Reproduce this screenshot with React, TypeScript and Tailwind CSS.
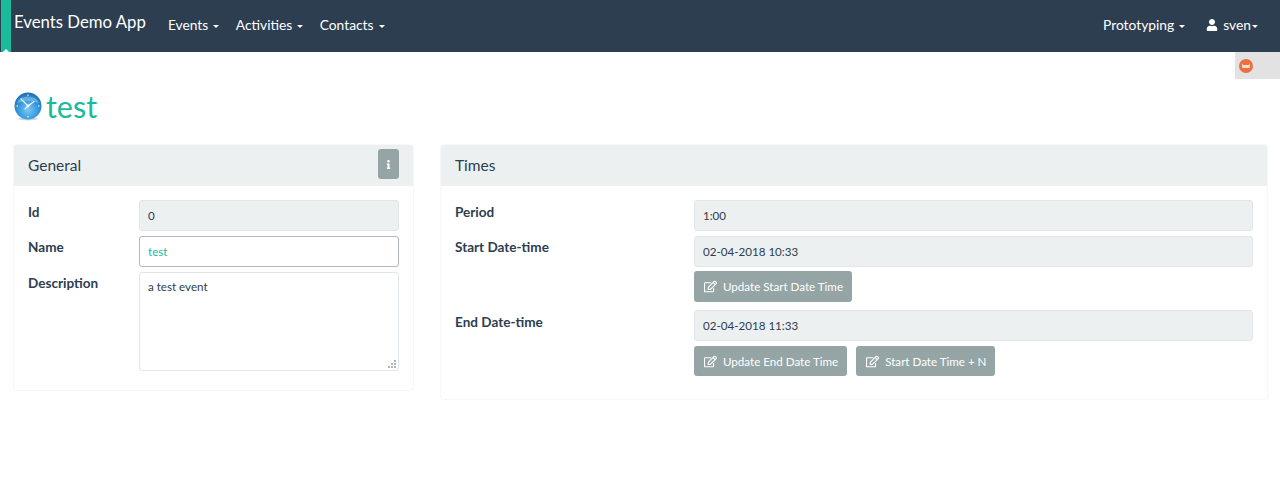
import React from "react";
import { FaUser, FaInfo, FaRegEdit } from "react-icons/fa";

function Caret() {
  return <span className="ml-[5px] mt-[2px] inline-block w-0 h-0 border-x-[3px] border-x-transparent border-t-[3px] border-t-white align-middle" />;
}

function NavItem({ label, className = "" }: { label: string; className?: string }) {
  return (
    <a className={"flex items-center text-white text-[13.8px] " + className}>
      {label}
      <Caret />
    </a>
  );
}

function ActionButton({ label, heightClass = "h-[31px]" }: { label: string; heightClass?: string }) {
  return (
    <button className={"flex items-center pl-[9px] pr-[9px] pt-px bg-[#95a5a6] rounded-[3px] text-white text-[11.6px] " + heightClass}>
      <FaRegEdit className="w-[13px] h-[13px] mr-[6px] ml-px -mt-px" />
      {label}
    </button>
  );
}

function Field({ value, className = "" }: { value: string; className?: string }) {
  return (
    <input
      readOnly
      value={value}
      className={"block w-full h-[31px] px-2 bg-[#ecf0f1] border border-[#e1e6ea] rounded-[3px] text-[11.6px] text-[#2c3e50] outline-none " + className}
    />
  );
}

function ClockLogo() {
  return (
    <svg width="28" height="29" viewBox="0 0 28 29" className="shrink-0">
      <defs>
        <radialGradient id="clockFace" cx="50%" cy="65%" r="60%">
          <stop offset="0%" stopColor="#7cc6f2" />
          <stop offset="55%" stopColor="#3b9fe0" />
          <stop offset="100%" stopColor="#1f74b8" />
        </radialGradient>
      </defs>
      <ellipse cx="14" cy="27" rx="10" ry="1.5" fill="#d5d9dc" />
      <circle cx="14" cy="14" r="13.5" fill="url(#clockFace)" />
      <path d="M3 11a11.5 9 0 0 1 22 0a22 14 0 0 0-22 0z" fill="#8fd0f5" opacity="0.5" />
      <path d="M14 14L7 7M14 14L20 9.5M14 14L11 17" stroke="#ffffff" strokeWidth="1.1" strokeLinecap="round" />
      <circle cx="14" cy="14" r="1.4" fill="#ffffff" />
      <path d="M14 2.5v1.5M14 24v1.5M2.5 14H4M24 14h1.5" stroke="#ffffff" strokeWidth="1" />
    </svg>
  );
}

function Row({
  label,
  labelClass,
  children,
  className = "",
}: {
  label: string;
  labelClass: string;
  children: React.ReactNode;
  className?: string;
}) {
  return (
    <div className={"flex " + className}>
      <label className={"shrink-0 font-bold text-[13.55px] leading-[20px] text-[#2c3e50] " + labelClass}>{label}</label>
      <div className="flex-1 min-w-0">{children}</div>
    </div>
  );
}

export default function App() {
  return (
    <div className="relative min-h-[486px] bg-white text-[#2c3e50] font-['Lato','Open_Sans',sans-serif]">
      <nav className="flex items-stretch h-[52px] bg-[#2c3e50]">
        <div className="relative w-[10px] ml-px bg-[#18bc9c] shrink-0">
          <span className="absolute left-[2px] bottom-0 w-0 h-0 border-x-[3px] border-x-transparent border-b-[3px] border-b-white" />
        </div>
        <a className="ml-[3px] mt-[10px] text-white text-[16.75px] leading-[24px]">Events Demo App</a>
        <div className="flex items-center ml-[22px] gap-[16.5px] pb-[2px]">
          <NavItem label="Events" />
          <NavItem label="Activities" />
          <NavItem label="Contacts" />
        </div>
        <div className="flex items-center ml-auto pr-[22px] pb-[2px]">
          <NavItem label="Prototyping" />
          <a className="flex items-center ml-[21px] text-white text-[13.8px]">
            <FaUser className="w-[12px] h-[12px] mr-[5px]" />
            sven
            <span className="ml-px mt-[2px] inline-block w-0 h-0 border-x-[3px] border-x-transparent border-t-[3px] border-t-white" />
          </a>
        </div>
      </nav>

      <div className="absolute top-[52px] right-0 w-[45px] h-[27px] bg-[#e2e2e2]">
        <div className="absolute left-[4px] top-[7px] w-[14px] h-[14px] rounded-full bg-[#ec6f3d] flex items-center justify-center">
          <svg width="10" height="6" viewBox="0 0 10 6">
            <path d="M1 0.5v3.5q0 1 1 1h6q1 0 1-1V0.5L7.5 2h-5z" fill="#f8ddd0" />
          </svg>
        </div>
      </div>

      <div className="flex items-center gap-[4px] pl-[14px] pt-[15px] h-[93px]">
        <ClockLogo />
        <h1 className="text-[30.5px] leading-[36px] text-[#18bc9c]">test</h1>
      </div>

      <div className="flex items-start gap-[28px] pl-[14px] pr-[13px]">
        <section className="w-[399px] h-[245px] bg-white rounded-[3px] shadow-[0_0_2px_rgba(0,0,0,0.12)]">
          <header className="flex items-start justify-between h-[41px] pl-[14px] pr-[14px] bg-[#ecf0f1] rounded-t-[3px] text-[15.5px]">
            <span className="leading-[41px]">General</span>
            <button className="flex items-center justify-center w-[21px] h-[30px] mt-[4px] bg-[#95a5a6] rounded-[3px] text-white">
              <FaInfo className="w-[9px] h-[9px]" />
            </button>
          </header>
          <div className="flex flex-col gap-[5px] pl-[14px] pr-[14px] pt-[14px]">
            <Row label="Id" labelClass="w-[111px] pt-[2px]"><Field value="0" /></Row>
            <Row label="Name" labelClass="w-[111px] pt-px">
              <input
                readOnly
                value="test"
                className="block w-full h-[31px] px-2 bg-white border border-[#b0b8c4] rounded-[3px] text-[11.6px] text-[#18bc9c] outline-none"
              />
            </Row>
            <Row label="Description" labelClass="w-[111px] pt-px">
              <div className="relative">
                <textarea
                  readOnly
                  value="a test event"
                  className="block w-full h-[99px] px-2 py-[5px] resize-none bg-white border border-[#e1e6ea] rounded-[3px] text-[11.6px] leading-[18px] text-[#2c3e50] outline-none"
                />
                <svg width="8" height="8" viewBox="0 0 8 8" className="absolute right-[3px] bottom-[3px]" fill="#b5b5b5">
                  <rect x="6" y="0" width="2" height="2" />
                  <rect x="3" y="3" width="2" height="2" />
                  <rect x="6" y="3" width="2" height="2" />
                  <rect x="0" y="6" width="2" height="2" />
                  <rect x="3" y="6" width="2" height="2" />
                  <rect x="6" y="6" width="2" height="2" />
                </svg>
              </div>
            </Row>
          </div>
        </section>

        <section className="flex-1 h-[254px] bg-white rounded-[3px] shadow-[0_0_2px_rgba(0,0,0,0.12)]">
          <header className="flex items-center h-[41px] px-[14px] bg-[#ecf0f1] rounded-t-[3px] text-[15.5px]">
            <span>Times</span>
          </header>
          <div className="flex flex-col pl-[14px] pr-[14px] pt-[14px]">
            <Row label="Period" labelClass="w-[239px] pt-[2px]" className="mb-[5px]"><Field value="1:00" /></Row>
            <Row label="Start Date-time" labelClass="w-[239px] pt-px" className="mb-[8px]">
              <Field value="02-04-2018 10:33" />
              <div className="flex mt-[4px]">
                <ActionButton label="Update Start Date Time" />
              </div>
            </Row>
            <Row label="End Date-time" labelClass="w-[239px] pt-[2px]">
              <Field value="02-04-2018 11:33" />
              <div className="flex gap-[9px] mt-[5px]">
                <ActionButton label="Update End Date Time" heightClass="h-[30px]" />
                <ActionButton label="Start Date Time + N" heightClass="h-[30px]" />
              </div>
            </Row>
          </div>
        </section>
      </div>
    </div>
  );
}
